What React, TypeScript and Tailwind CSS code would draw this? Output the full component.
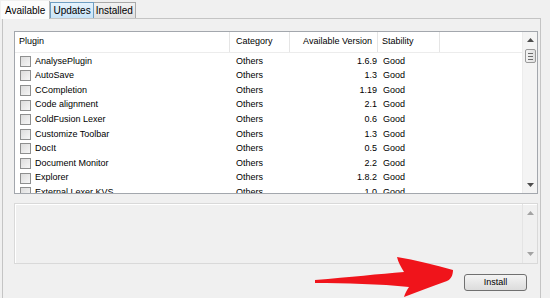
import React from "react";

const PLUGINS = [
  { name: "AnalysePlugin", version: "1.6.9" },
  { name: "AutoSave", version: "1.3" },
  { name: "CCompletion", version: "1.19" },
  { name: "Code alignment", version: "2.1" },
  { name: "ColdFusion Lexer", version: "0.6" },
  { name: "Customize Toolbar", version: "1.3" },
  { name: "DocIt", version: "0.5" },
  { name: "Document Monitor", version: "2.2" },
  { name: "Explorer", version: "1.8.2" },
  { name: "External Lexer KVS", version: "1.0" },
];

const COLS = "grid grid-cols-[215px_60px_88px_62px_1fr]";

function Checkbox() {
  return (
    <span className="w-[11px] h-[11px] border border-[#8e8f8f] bg-gradient-to-br from-[#dcdcdc] to-[#f6f6f6] shrink-0" />
  );
}

function Arrow({ up, disabled }: { up?: boolean; disabled?: boolean }) {
  return (
    <svg width="7" height="4" viewBox="0 0 7 4" className="shrink-0">
      <polygon
        points={up ? "0,4 7,4 3.5,0" : "0,0 7,0 3.5,4"}
        fill={disabled ? "#a3a3a3" : "#4d4d4d"}
      />
    </svg>
  );
}

function Tabs() {
  return (
    <div className="flex items-end h-[17px] text-[10px]">
      <div className="h-[18px] px-[4px] flex items-center bg-[#fcfcfc] border-r border-[#b5b5b5] relative z-10 translate-y-[1px]">
        Available
      </div>
      <div className="h-[16px] px-[2px] flex items-center bg-gradient-to-b from-[#e6f3fd] to-[#c8e3f7] border border-[#6f9ec2] border-b-0">
        Updates
      </div>
      <div className="h-[16px] px-[2px] flex items-center bg-gradient-to-b from-[#f2f2f2] to-[#e1e1e1] border border-l-0 border-[#a9a9a9] border-b-0">
        Installed
      </div>
    </div>
  );
}

function PluginList() {
  return (
    <div className="h-[163px] border border-[#a3a7ad] bg-white flex overflow-hidden">
      <div className="flex-1 flex flex-col">
        <div className={`${COLS} h-[21px] items-center border-b border-[#ececec] shrink-0`}>
          <div className="pl-[4px] border-r border-[#e5e5e5] h-full flex items-center">Plugin</div>
          <div className="pl-[6px] border-r border-[#e5e5e5] h-full flex items-center">Category</div>
          <div className="pr-[5px] border-r border-[#e5e5e5] h-full flex items-center justify-end">Available Version</div>
          <div className="pl-[4px] border-r border-[#e5e5e5] h-full flex items-center">Stability</div>
          <div />
        </div>
        <div className="pt-[1px]">
          {PLUGINS.map((p) => (
            <div key={p.name} className={`${COLS} h-[14.6px] items-center`}>
              <div className="pl-[5px] flex items-center gap-[4px]">
                <Checkbox />
                <span>{p.name}</span>
              </div>
              <div className="pl-[6px]">Others</div>
              <div className="pr-[1px] text-right">{p.version}</div>
              <div className="pl-[5px]">Good</div>
              <div />
            </div>
          ))}
        </div>
      </div>
      <div className="w-[15px] bg-[#f4f4f4] border-l border-[#ececec] flex flex-col items-center justify-between py-[6px]">
        <div className="flex flex-col items-center gap-[7px]">
          <Arrow up />
          <div className="w-[11px] h-[14px] border border-[#9a9a9a] rounded-[2px] bg-gradient-to-r from-[#f3f3f3] to-[#e0e0e0] flex flex-col items-center justify-center gap-[2px]">
            <span className="w-[5px] h-[1px] bg-[#6c6c6c]" />
            <span className="w-[5px] h-[1px] bg-[#6c6c6c]" />
            <span className="w-[5px] h-[1px] bg-[#6c6c6c]" />
          </div>
        </div>
        <Arrow />
      </div>
    </div>
  );
}

function Description() {
  return (
    <div className="mt-[9px] h-[61px] border border-[#d9d9d9] shadow-[inset_1px_1px_0_#ffffff] bg-[#f0f0f0] flex justify-end">
      <div className="w-[15px] border-l border-[#e4e4e4] flex flex-col items-center justify-between py-[7px]">
        <Arrow up disabled />
        <Arrow disabled />
      </div>
    </div>
  );
}

function RedArrow() {
  return (
    <svg
      className="absolute left-[313px] top-[256px]"
      width="142"
      height="42"
      viewBox="313 256 142 42"
    >
      <path
        d="M315 280 C350 277 380 274 404 272 C401 267 398 262 397 257 C415 260 435 265 453 270 C453 275 451 279 447 281 C432 286 418 292 404 297 C405 293 407 290 409 287 C380 284 345 283 315 283 Z"
        fill="#f0141b"
      />
    </svg>
  );
}

export default function App() {
  return (
    <div
      className="relative w-[550px] h-[298px] bg-[#f0f0f0] overflow-hidden text-[9px] text-black"
      style={{ fontFamily: '"Liberation Sans", Arial, sans-serif' }}
    >
      <div className="pl-[1px] pt-[1px]">
        <Tabs />
      </div>
      <div className="ml-[2px] w-[539px] h-[300px] border border-[#c4c4c4] bg-[#f0f0f0] pl-[11px] pr-[2px] pt-[12px]">
        <PluginList />
        <Description />
        <div className="flex justify-end pr-[11px] mt-[10px]">
          <button className="w-[63px] h-[17px] border border-[#707070] rounded-[3px] bg-gradient-to-b from-[#f4f4f4] to-[#dcdcdc] text-[9px] flex items-center justify-center">
            Install
          </button>
        </div>
      </div>
      <RedArrow />
    </div>
  );
}
